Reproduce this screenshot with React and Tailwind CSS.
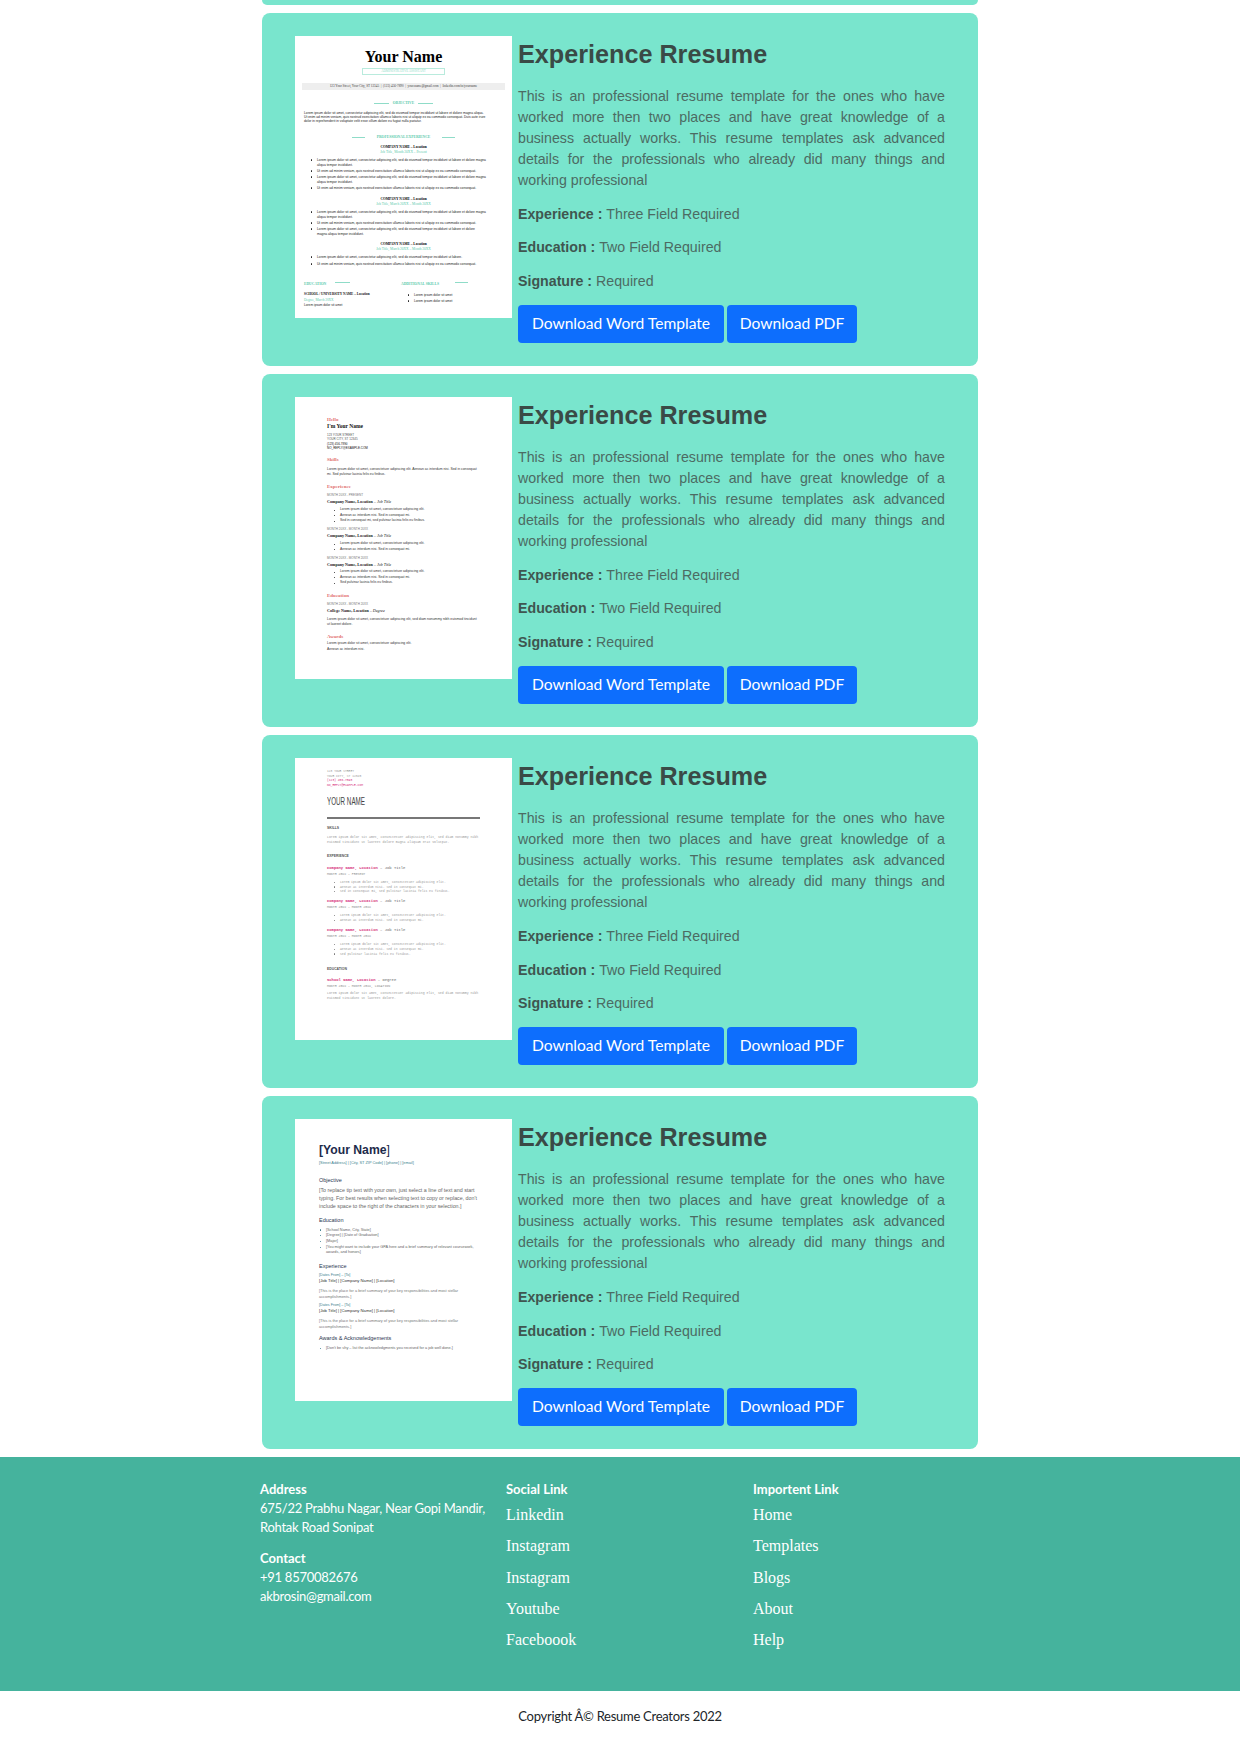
import React from 'react';

const SANS = "font-['Liberation_Sans',sans-serif]";
const SERIF = "font-['Liberation_Serif',serif]";
const UI = "font-['Lato',sans-serif]";

// small bullet row used by all four thumbnails
function Dot({ children, gap = 'gap-[4.7px]', dot = 'bg-[#222]', top = 'mt-[1.9px]' }) {
    return (
        <li className={`flex ${gap}`}>
            <span className={`${top} ${dot} size-[1.3px] rounded-full shrink-0`} />
            <span>{children}</span>
        </li>
    );
}

// ── Thumbnail 1: teal serif resume ──────────────────────────
function Heading({ children, wide }) {
    return (
        <div className={`flex items-center justify-center leading-[5px] ${wide ? 'gap-[12px]' : 'gap-[4px]'}`}>
            <span className={`h-px bg-[#8fdcc8] ${wide ? 'w-[12.5px]' : 'w-[14.5px]'}`} />
            <span className="font-bold text-[#5ccbad] text-[3.7px]">{children}</span>
            <span className={`h-px bg-[#8fdcc8] ${wide ? 'w-[12.5px]' : 'w-[14.5px]'}`} />
        </div>
    );
}

function JobHead({ title }) {
    return (
        <div className="text-center leading-[5px]">
            <div className="font-bold text-[3.5px] text-black">COMPANY NAME – Location</div>
            <div className="text-[3.5px] text-[#5ccbad]">{title}</div>
        </div>
    );
}

function ThumbTeal() {
    const list = `${SANS} mt-[3px] pl-[16px] pr-[13px] text-[3.3px] leading-[5px] text-[#222] flex flex-col`;
    return (
        <div className={`${SERIF} w-[217px] h-[282px] shrink-0 bg-white pt-[12px] overflow-hidden`}>
            <div className="text-center font-bold text-[16px] leading-[18px] text-black">Your Name</div>
            <div className="mx-auto mt-[2px] w-[83px] h-[7px] border border-[#b9ebdd] text-center text-[3.2px] leading-[5px] text-[#8fdcc8]">ADMINISTRATIVE ASSISTANT</div>
            <div className="mx-[7px] mt-[8px] h-[7px] bg-[#eeeeee] text-center text-[3.3px] leading-[7px] text-[#444] whitespace-nowrap">123 Your Street, Your City, ST 12345 &nbsp;|&nbsp; (123) 456-7890 &nbsp;|&nbsp; your.name@gmail.com &nbsp;|&nbsp; linkedin.com/in/yourname</div>
            <div className="mt-[10.5px]"><Heading>OBJECTIVE</Heading></div>
            <div className={`${SANS} mt-[5.5px] px-[9px] text-[3.3px] leading-[4px] text-[#222] whitespace-nowrap`}>
                <div>Lorem ipsum dolor sit amet, consectetur adipiscing elit, sed do eiusmod tempor incididunt ut labore et dolore magna aliqua.</div>
                <div>Ut enim ad minim veniam, quis nostrud exercitation ullamco laboris nisi ut aliquip ex ea commodo consequat. Duis aute irure</div>
                <div>dolor in reprehenderit in voluptate velit esse cillum dolore eu fugiat nulla pariatur.</div>
            </div>
            <div className="mt-[11.5px]"><Heading wide>PROFESSIONAL EXPERIENCE</Heading></div>
            <div className="mt-[5px]"><JobHead title="Job Title, Month 20XX – Present" /></div>
            <ul className={`${list} gap-px`}>
                <Dot>Lorem ipsum dolor sit amet, consectetur adipiscing elit, sed do eiusmod tempor incididunt ut labore et dolore magna<br />aliqua tempor incididunt.</Dot>
                <Dot>Ut enim ad minim veniam, quis nostrud exercitation ullamco laboris nisi ut aliquip ex ea commodo consequat.</Dot>
                <Dot>Lorem ipsum dolor sit amet, consectetur adipiscing elit, sed do eiusmod tempor incididunt ut labore et dolore magna<br />aliqua tempor incididunt.</Dot>
                <Dot>Ut enim ad minim veniam, quis nostrud exercitation ullamco laboris nisi ut aliquip ex ea commodo consequat.</Dot>
            </ul>
            <div className="mt-[6px]"><JobHead title="Job Title, March 20XX – Month 20XX" /></div>
            <ul className={`${list} gap-px`}>
                <Dot>Lorem ipsum dolor sit amet, consectetur adipiscing elit, sed do eiusmod tempor incididunt ut labore et dolore magna<br />aliqua tempor incididunt.</Dot>
                <Dot>Ut enim ad minim veniam, quis nostrud exercitation ullamco laboris nisi ut aliquip ex ea commodo consequat.</Dot>
                <Dot>Lorem ipsum dolor sit amet, consectetur adipiscing elit, sed do eiusmod tempor incididunt ut labore et dolore<br />magna aliqua tempor incididunt.</Dot>
            </ul>
            <div className="mt-[5px]"><JobHead title="Job Title, March 20XX – Month 20XX" /></div>
            <ul className={`${list} gap-[2px]`}>
                <Dot>Lorem ipsum dolor sit amet, consectetur adipiscing elit, sed do eiusmod tempor incididunt ut labore.</Dot>
                <Dot>Ut enim ad minim veniam, quis nostrud exercitation ullamco laboris nisi ut aliquip ex ea commodo consequat.</Dot>
            </ul>
            <div className="mt-[15px] grid grid-cols-[97px_1fr] pl-[9px]">
                <div>
                    <div className="flex gap-[9px] text-[3.7px] leading-[5px] font-bold text-[#5ccbad]">EDUCATION<span className="h-px w-[15px] bg-[#8fdcc8]" /></div>
                    <div className="mt-[5.75px] text-[3.4px] leading-[5.5px] text-[#111] font-bold">SCHOOL / UNIVERSITY NAME – Location</div>
                    <div className="text-[3.4px] leading-[5.5px] text-[#5ccbad]">Degree, March 20XX</div>
                    <div className={`${SANS} text-[3.2px] leading-[5px] text-[#222]`}>Lorem ipsum dolor sit amet</div>
                </div>
                <div>
                    <div className="flex gap-[16px] text-[3.7px] leading-[5px] font-bold text-[#5ccbad]">ADDITIONAL SKILLS<span className="h-px w-[13px] bg-[#8fdcc8]" /></div>
                    <ul className={`${SANS} mt-[5.5px] pl-[7px] text-[3.2px] leading-[6px] text-[#222]`}>
                        <Dot top="mt-[2.3px]">Lorem ipsum dolor sit amet</Dot>
                        <Dot top="mt-[2.3px]">Lorem ipsum dolor sit amet</Dot>
                    </ul>
                </div>
            </div>
        </div>
    );
}

// ── Thumbnail 2: red headings ───────────────────────────────
function RedHead({ children, className }) {
    return <div className={`font-bold text-[5px] leading-[6px] text-[#e27070] ${className}`}>{children}</div>;
}

function CoLine({ date, name, role }) {
    return (
        <>
            <div className={`${SANS} text-[3px] leading-[4px] text-[#777]`}>{date}</div>
            <div className="mt-[1.5px] text-[4.1px] leading-[5px] text-[#222]"><b>{name}</b> – <i>{role}</i></div>
        </>
    );
}

function ThumbRed() {
    const list = `${SANS} pl-[7px] text-[3.4px] leading-[5.5px] text-[#333]`;
    return (
        <div className={`${SERIF} w-[217px] h-[282px] shrink-0 bg-white pt-[20px] pl-[32px] overflow-hidden`}>
            <RedHead>Hello</RedHead>
            <div className="font-bold text-[5.5px] leading-[6px] text-[#111]">I'm Your Name</div>
            <div className={`${SANS} mt-[3.8px] text-[3px] leading-[4.4px] text-[#555]`}>
                <div>123 YOUR STREET</div>
                <div>YOUR CITY, ST 12345</div>
                <div className="text-[#111]">(123) 456-7890</div>
                <div className="text-[#111]">NO_REPLY@EXAMPLE.COM</div>
            </div>
            <RedHead className="mt-[6.6px]">Skills</RedHead>
            <div className={`${SANS} mt-[3.4px] text-[3.4px] leading-[5.2px] text-[#333] whitespace-nowrap`}>
                <div>Lorem ipsum dolor sit amet, consectetuer adipiscing elit. Aenean ac interdum nisi. Sed in consequat</div>
                <div>mi. Sed pulvinar lacinia felis eu finibus.</div>
            </div>
            <RedHead className="mt-[7.2px]">Experience</RedHead>
            <div className="mt-[3px]"><CoLine date="MONTH 20XX - PRESENT" name="Company Name, Location" role="Job Title" /></div>
            <ul className={`${list} mt-[3.75px]`}>
                <Dot top="mt-[2.1px]">Lorem ipsum dolor sit amet, consectetuer adipiscing elit.</Dot>
                <Dot top="mt-[2.1px]">Aenean ac interdum nisi. Sed in consequat mi.</Dot>
                <Dot top="mt-[2.1px]">Sed in consequat mi, sed pulvinar lacinia felis eu finibus.</Dot>
            </ul>
            <div className="mt-[3.25px]"><CoLine date="MONTH 20XX - MONTH 20XX" name="Company Name, Location" role="Job Title" /></div>
            <ul className={`${list} mt-[3.75px]`}>
                <Dot top="mt-[2.1px]">Lorem ipsum dolor sit amet, consectetuer adipiscing elit.</Dot>
                <Dot top="mt-[2.1px]">Aenean ac interdum nisi. Sed in consequat mi.</Dot>
            </ul>
            <div className="mt-[3.75px]"><CoLine date="MONTH 20XX - MONTH 20XX" name="Company Name, Location" role="Job Title" /></div>
            <ul className={`${list} mt-[2.75px]`}>
                <Dot top="mt-[2.1px]">Lorem ipsum dolor sit amet, consectetuer adipiscing elit.</Dot>
                <Dot top="mt-[2.1px]">Aenean ac interdum nisi. Sed in consequat mi.</Dot>
                <Dot top="mt-[2.1px]">Sed pulvinar lacinia felis eu finibus.</Dot>
            </ul>
            <RedHead className="mt-[7.25px]">Education</RedHead>
            <div className="mt-[3px]"><CoLine date="MONTH 20XX - MONTH 20XX" name="College Name, Location" role="Degree" /></div>
            <div className={`${SANS} mt-[3.9px] text-[3.4px] leading-[5.2px] text-[#333] whitespace-nowrap`}>
                <div>Lorem ipsum dolor sit amet, consectetuer adipiscing elit, sed diam nonummy nibh euismod tincidunt</div>
                <div>ut laoreet dolore.</div>
            </div>
            <RedHead className="mt-[7.2px]">Awards</RedHead>
            <div className={`${SANS} mt-[1.25px] text-[3.4px] leading-[5.5px] text-[#333]`}>
                <div>Lorem ipsum dolor sit amet, consectetuer adipiscing elit.</div>
                <div>Aenean ac interdum nisi.</div>
            </div>
        </div>
    );
}

// ── Thumbnail 3: mono with pink companies ───────────────────
function MonoJob({ name, role, date, children }) {
    return (
        <div>
            <div className="text-[3.85px] leading-[5px] text-[#666]"><b className="text-[#d6307d]">{name}</b> – {role}</div>
            <div className="mt-[1px] text-[3.2px] leading-[5px] text-[#888]">{date}</div>
            {children}
        </div>
    );
}

function ThumbMono() {
    const mono = "font-['Liberation_Mono',monospace]";
    const list = 'mt-[3px] pl-[7px] text-[3.1px] leading-[4.7px] text-[#999]';
    const dot = 'bg-[#777]';
    return (
        <div className={`${mono} w-[217px] h-[282px] shrink-0 bg-white pt-[11.7px] pl-[32px] overflow-hidden`}>
            <div className="text-[3px] leading-[4.6px] text-[#999]">
                <div>123 YOUR STREET</div>
                <div>YOUR CITY, ST 12345</div>
                <div className="text-[#d6307d]">(123) 456-7890</div>
                <div className="text-[#d6307d]">NO_REPLY@EXAMPLE.COM</div>
            </div>
            <div className={`${SANS} mt-[7px] text-[11px] leading-[12px] text-[#444] origin-left scale-x-[0.57] whitespace-nowrap`}>YOUR NAME</div>
            <div className="mt-[10px] mr-[32px] h-[2px] bg-[#777]" />
            <div className={`${SANS} mt-[7px] font-bold text-[3.4px] leading-[4px] text-[#555]`}>SKILLS</div>
            <div className="mt-[4.5px] text-[3.2px] leading-[5px] text-[#999] whitespace-nowrap">
                <div>Lorem ipsum dolor sit amet, consectetuer adipiscing elit, sed diam nonummy nibh</div>
                <div>euismod tincidunt ut laoreet dolore magna aliquam erat volutpat.</div>
            </div>
            <div className={`${SANS} mt-[9.5px] font-bold text-[3.4px] leading-[4px] text-[#555]`}>EXPERIENCE</div>
            <div className="mt-[7.5px] flex flex-col gap-[5.5px]">
                <MonoJob name="Company Name, Location" role="Job Title" date="MONTH 20XX – PRESENT">
                    <ul className={list}>
                        <Dot dot={dot} top="mt-[1.7px]">Lorem ipsum dolor sit amet, consectetuer adipiscing elit.</Dot>
                        <Dot dot={dot} top="mt-[1.7px]">Aenean ac interdum nisi. Sed in consequat mi.</Dot>
                        <Dot dot={dot} top="mt-[1.7px]">Sed in consequat mi, sed pulvinar lacinia felis eu finibus.</Dot>
                    </ul>
                </MonoJob>
                <MonoJob name="Company Name, Location" role="Job Title" date="MONTH 20XX – MONTH 20XX">
                    <ul className={list}>
                        <Dot dot={dot} top="mt-[1.7px]">Lorem ipsum dolor sit amet, consectetuer adipiscing elit.</Dot>
                        <Dot dot={dot} top="mt-[1.7px]">Aenean ac interdum nisi. Sed in consequat mi.</Dot>
                    </ul>
                </MonoJob>
                <MonoJob name="Company Name, Location" role="Job Title" date="MONTH 20XX – MONTH 20XX">
                    <ul className={list}>
                        <Dot dot={dot} top="mt-[1.7px]">Lorem ipsum dolor sit amet, consectetuer adipiscing elit.</Dot>
                        <Dot dot={dot} top="mt-[1.7px]">Aenean ac interdum nisi. Sed in consequat mi.</Dot>
                        <Dot dot={dot} top="mt-[1.7px]">Sed pulvinar lacinia felis eu finibus.</Dot>
                    </ul>
                </MonoJob>
            </div>
            <div className={`${SANS} mt-[10.25px] font-bold text-[3.4px] leading-[4px] text-[#555]`}>EDUCATION</div>
            <div className="mt-[7.5px]">
                <MonoJob name="School Name, Location" role="Degree" date="MONTH 20XX – MONTH 20XX, LOCATION" />
            </div>
            <div className="mt-[2px] text-[3.2px] leading-[5px] text-[#999] whitespace-nowrap">
                <div>Lorem ipsum dolor sit amet, consectetuer adipiscing elit, sed diam nonummy nibh</div>
                <div>euismod tincidunt ut laoreet dolore.</div>
            </div>
        </div>
    );
}

// ── Thumbnail 4: plain blue ─────────────────────────────────
function ThumbBlue() {
    const head = 'text-[5.5px] leading-[7px] text-[#2a3550]';
    const list = 'pl-[1px] pr-[26px] text-[3.85px] leading-[5.7px] text-[#666]';
    const dot = 'bg-[#3d7f8f]';
    const dates = 'text-[3.7px] leading-[5.5px] text-[#3d7f8f]';
    const job = 'text-[4.2px] leading-[6px] text-[#333]';
    const summary = 'mt-[4px] text-[3.9px] leading-[5.7px] text-[#777] whitespace-nowrap';
    return (
        <div className={`${SANS} w-[217px] h-[282px] shrink-0 bg-white pt-[24px] pl-[24px] overflow-hidden`}>
            <div className="font-bold text-[12.2px] leading-[14px] text-[#1c2a4a]">[Your Name<span className="font-normal">]</span></div>
            <div className="mt-[2.5px] text-[3.9px] leading-[5px] text-[#3d7f8f]">[Street Address] | [City, ST ZIP Code] | [phone] | [email]</div>
            <div className={`mt-[12px] ${head}`}>Objective</div>
            <div className="mt-[2.5px] text-[5.3px] leading-[8px] text-[#666] whitespace-nowrap">
                <div>[To replace tip text with your own, just select a line of text and start</div>
                <div>typing. For best results when selecting text to copy or replace, don't</div>
                <div>include space to the right of the characters in your selection.]</div>
            </div>
            <div className={`mt-[6.5px] ${head}`}>Education</div>
            <ul className={`${list} mt-[3.65px]`}>
                <Dot dot={dot}>[School Name, City, State]</Dot>
                <Dot dot={dot}>[Degree] | [Date of Graduation]</Dot>
                <Dot dot={dot}>[Major]</Dot>
                <Dot dot={dot}>[You might want to include your GPA here and a brief summary of relevant coursework,<br />awards, and honors]</Dot>
            </ul>
            <div className={`mt-[6.85px] ${head}`}>Experience</div>
            <div className={`mt-[2.75px] ${dates}`}>[Dates From] – [To]</div>
            <div className={job}>[Job Title] | [Company Name] | [Location]</div>
            <div className={summary}>
                <div>[This is the place for a brief summary of your key responsibilities and most stellar</div>
                <div>accomplishments.]</div>
            </div>
            <div className={`mt-[3.25px] ${dates}`}>[Dates From] – [To]</div>
            <div className={job}>[Job Title] | [Company Name] | [Location]</div>
            <div className={summary}>
                <div>[This is the place for a brief summary of your key responsibilities and most stellar</div>
                <div>accomplishments.]</div>
            </div>
            <div className={`mt-[5.5px] ${head}`}>Awards &amp; Acknowledgements</div>
            <ul className={`${list} mt-[3.65px]`}>
                <Dot dot={dot}>[Don't be shy – list the acknowledgments you received for a job well done.]</Dot>
            </ul>
        </div>
    );
}

// ── Template card ───────────────────────────────────────────
function TemplateCard({ thumb }) {
    return (
        <div className="h-[353.5px] rounded-[8px] bg-[#79e5cd] pt-[23.5px] pl-[33px] pr-[33px] flex gap-[6px]">
            {thumb}
            <div className={`${SANS} flex-1 pt-[3.5px] text-[#4c6b63]`}>
                <h2 className="text-[25.2px] leading-[29px] font-bold text-[#3a4a46]">Experience Rresume</h2>
                <p className="mt-[17px] text-[14.2px] leading-[21px] text-justify">
                    This is an professional resume template for the ones who have worked more then two places and have great knowledge of a business actually works. This resume templates ask advanced details for the professionals who already did many things and working professional
                </p>
                <p className="mt-[13px] text-[14.2px] leading-[21px]"><b className="text-[#3f5650]">Experience : </b>Three Field Required</p>
                <p className="mt-[12.8px] text-[14.2px] leading-[21px]"><b className="text-[#3f5650]">Education : </b>Two Field Required</p>
                <p className="mt-[12.2px] text-[14.2px] leading-[21px]"><b className="text-[#3f5650]">Signature : </b>Required</p>
                <div className={`${UI} mt-[13px] flex gap-[3px]`}>
                    <button className="h-[38px] w-[206px] rounded-[4px] bg-[#0d6efd] text-[15.6px] text-white">Download Word Template</button>
                    <button className="h-[38px] w-[130px] rounded-[4px] bg-[#0d6efd] text-[15.6px] text-white">Download PDF</button>
                </div>
            </div>
        </div>
    );
}

const SOCIAL = ['Linkedin', 'Instagram', 'Instagram', 'Youtube', 'Faceboook'];
const PAGES = ['Home', 'Templates', 'Blogs', 'About', 'Help'];

function LinkColumn({ title, links }) {
    return (
        <div>
            <h4 className="text-[13px] leading-[19px] font-bold">{title}</h4>
            <ul className={`${SERIF} mt-[6px] text-[16px] leading-[19px] flex flex-col gap-[12.3px]`}>
                {links.map((l, i) => <li key={i}>{l}</li>)}
            </ul>
        </div>
    );
}

export default function App() {
    return (
        <div className="bg-white min-h-[1754px]">
            <div className="mx-auto w-[716px] flex flex-col gap-[7.6px]">
                <div className="h-[5px] rounded-b-[8px] bg-[#79e5cd]" />
                <TemplateCard thumb={<ThumbTeal />} />
                <TemplateCard thumb={<ThumbRed />} />
                <TemplateCard thumb={<ThumbMono />} />
                <TemplateCard thumb={<ThumbBlue />} />
            </div>

            <footer className={`${UI} mt-[7.6px] h-[234px] bg-[#45b39d] text-white pt-[23px] pl-[260px]`}>
                <div className="grid grid-cols-[246px_247px_1fr]">
                    <div className="text-[13px] leading-[19px] tracking-[-0.27px]">
                        <h4 className="font-bold tracking-normal">Address</h4>
                        <p>675/22 Prabhu Nagar, Near Gopi Mandir,<br />Rohtak Road Sonipat</p>
                        <h4 className="mt-[12px] font-bold tracking-normal">Contact</h4>
                        <p>+91 8570082676</p>
                        <p>akbrosin@gmail.com</p>
                    </div>
                    <LinkColumn title="Social Link" links={SOCIAL} />
                    <LinkColumn title="Importent Link" links={PAGES} />
                </div>
            </footer>

            <p className={`${UI} mt-[15px] text-center text-[13px] leading-[20px] tracking-[-0.27px] text-[#212529]`}>Copyright Â© Resume Creators 2022</p>
        </div>
    );
}
